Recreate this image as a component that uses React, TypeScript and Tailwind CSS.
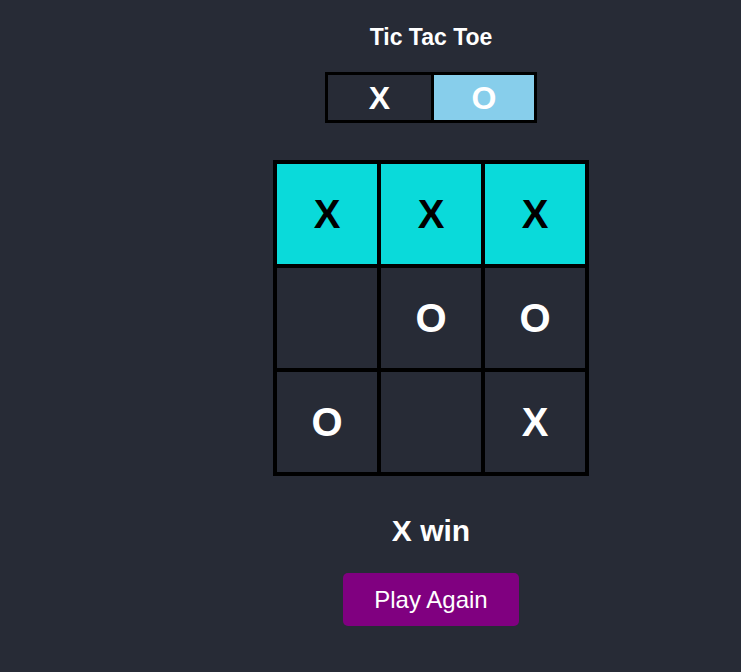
import { useState } from "react"

type Mark = "X" | "O" | null

const WIN_LINES = [
    [0, 1, 2], [3, 4, 5], [6, 7, 8],
    [0, 3, 6], [1, 4, 7], [2, 5, 8],
    [0, 4, 8], [2, 4, 6],
]

function findWinner(board: Mark[]) {
    for (const line of WIN_LINES) {
        const [a, b, c] = line
        if (board[a] && board[a] === board[b] && board[a] === board[c]) {
            return { mark: board[a], line }
        }
    }
    return null
}

export default function App() {
    const [board, setBoard] = useState<Mark[]>(["X", "X", "X", null, "O", "O", "O", null, "X"])
    const [turn, setTurn] = useState<"X" | "O">("O")

    const winner = findWinner(board)

    const play = (i: number) => {
        if (winner || board[i]) return
        const next = [...board]
        next[i] = turn
        setBoard(next)
        setTurn(turn === "X" ? "O" : "X")
    }

    const reset = () => {
        setBoard(Array(9).fill(null))
        setTurn("X")
    }

    return (
        <div className="min-h-screen w-full overflow-hidden bg-[#272b36] font-['Liberation_Sans',Arial,sans-serif] text-white">
            <div className="w-[862px] flex flex-col items-center pt-[25px]">

                {/* Title */}
                <h1 className="text-[23px] leading-[25px] font-bold">Tic Tac Toe</h1>

                {/* Turn indicator */}
                <div className="mt-[22px] flex border-[3px] border-black">
                    <div
                        className={`w-[106px] h-[45px] border-r-[3px] border-black flex items-center justify-center text-[32px] font-bold ${turn === "X" ? "bg-[#87ceeb]" : ""}`}
                    >
                        X
                    </div>
                    <div
                        className={`w-[100px] h-[45px] flex items-center justify-center text-[32px] font-bold ${turn === "O" ? "bg-[#87ceeb]" : ""}`}
                    >
                        O
                    </div>
                </div>

                {/* Board */}
                <div className="mt-[37px] grid grid-cols-3 border-2 border-black">
                    {board.map((cell, i) => {
                        const won = winner?.line.includes(i)
                        return (
                            <button
                                key={i}
                                onClick={() => play(i)}
                                className={`w-[104px] h-[104px] border-2 border-black flex items-center justify-center text-[40px] font-bold ${won ? "bg-[#0adada] text-black" : "text-white"}`}
                            >
                                {cell}
                            </button>
                        )
                    })}
                </div>

                {/* Status */}
                <p className="mt-[38px] text-[30px] leading-[34px] font-bold">
                    {winner ? `${winner.mark} win` : `${turn} turn`}
                </p>

                <button
                    onClick={reset}
                    className="mt-[25px] h-[53px] w-[176px] rounded-[5px] bg-[#800080] text-[24px] text-white flex items-center justify-center"
                >
                    Play Again
                </button>
            </div>
        </div>
    )
}
